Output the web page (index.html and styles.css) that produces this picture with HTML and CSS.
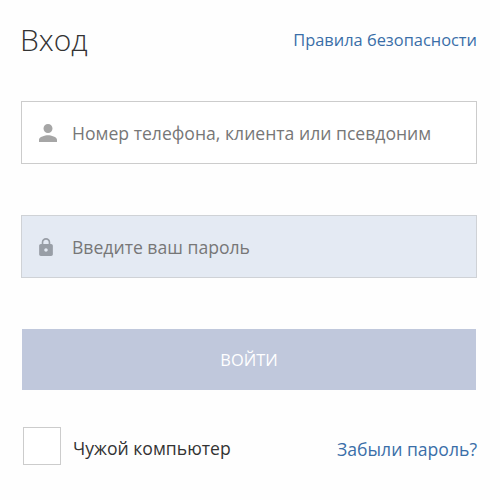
FILE: index.html
```html
<!DOCTYPE html>
<html lang="ru">
<head>
    <meta charset="UTF-8">
    <meta name="viewport" content="width=device-width, initial-scale=1.0">
    <title>Вход</title>
    <link rel="stylesheet" href="styles.css">
</head>
<body>
    <form class="login">
        <div class="header">
            <h1>Вход</h1>
            <a class="link rules" href="#">Правила безопасности</a>
        </div>
        <label class="field">
            <svg class="icon icon-user" viewBox="4 4 16 16">
                <path d="M12 12c2.21 0 4-1.79 4-4s-1.79-4-4-4-4 1.79-4 4 1.79 4 4 4zm0 2c-2.67 0-8 1.34-8 4v2h16v-2c0-2.66-5.33-4-8-4z"/>
            </svg>
            <input type="text" placeholder="Номер телефона, клиента или псевдоним">
        </label>
        <label class="field password">
            <svg class="icon icon-lock" viewBox="4 1 16 21">
                <path d="M18 8h-1V6c0-2.76-2.24-5-5-5S7 3.24 7 6v2H6c-1.1 0-2 .9-2 2v10c0 1.1.9 2 2 2h12c1.1 0 2-.9 2-2V10c0-1.1-.9-2-2-2zm-6 9c-1.1 0-2-.9-2-2s.9-2 2-2 2 .9 2 2-.9 2-2 2zm3.1-9H8.9V6c0-1.71 1.39-3.1 3.1-3.1 1.71 0 3.1 1.39 3.1 3.1v2z"/>
            </svg>
            <input type="password" placeholder="Введите ваш пароль">
        </label>
        <button class="submit-btn" type="button">ВОЙТИ</button>
        <div class="footer">
            <label class="foreign">
                <input class="checkbox" type="checkbox">
                <span class="foreign-text">Чужой компьютер</span>
            </label>
            <a class="link forgot" href="#">Забыли пароль?</a>
        </div>
    </form>
</body>
</html>
```

FILE: styles.css
```css
* {
    box-sizing: border-box;
}

body {
    margin: 0;
    background-color: #fefefe;
    font-family: 'Open Sans', 'Noto Sans', sans-serif;
    color: #333;
}

.login {
    width: 456px;
    margin: 0 0 0 21px;
    padding-top: 19px;
}

.header {
    display: flex;
    justify-content: space-between;
    height: 82px;
}

h1 {
    margin: 0 0 0 -1px;
    font-size: 30px;
    font-weight: 300;
    line-height: 42px;
}

.link {
    color: #3a6ea8;
    text-decoration: none;
    white-space: nowrap;
}

.rules {
    font-size: 16.4px;
    line-height: 42px;
}

.field {
    display: flex;
    align-items: center;
    height: 63px;
    margin-bottom: 51px;
    padding-left: 17px;
    border: 1px solid #ccc;
    background-color: #fff;
}

.password {
    background-color: #e4eaf3;
    border-color: #cfd2d6;
}

.icon {
    flex: none;
    fill: #a6a6a6;
}

.icon-user {
    width: 18px;
    height: 18px;
    margin-right: 15px;
}

.icon-lock {
    width: 14px;
    height: 18px;
    margin-right: 19px;
    fill: #989ea6;
}

.field input {
    flex: 1;
    min-width: 0;
    padding: 0;
    border: none;
    outline: none;
    background: none;
    font-family: inherit;
    font-size: 17.6px;
}

.field input::placeholder {
    color: #777;
}

.submit-btn {
    display: block;
    width: 454px;
    height: 61px;
    margin: 0 1px;
    border: none;
    background-color: #c0c8dc;
    color: #fff;
    font-family: inherit;
    font-size: 16.4px;
}

.footer {
    display: flex;
    justify-content: space-between;
    align-items: center;
    margin-top: 37px;
    padding-left: 2px;
}

.foreign {
    display: flex;
    align-items: center;
    gap: 12px;
    font-size: 17.6px;
}

.foreign-text {
    padding-top: 4px;
}

.checkbox {
    appearance: none;
    width: 38px;
    height: 38px;
    margin: 0;
    border: 1px solid #ccc;
    background-color: #fff;
}

.forgot {
    padding-top: 6px;
    font-size: 17.6px;
}
```
